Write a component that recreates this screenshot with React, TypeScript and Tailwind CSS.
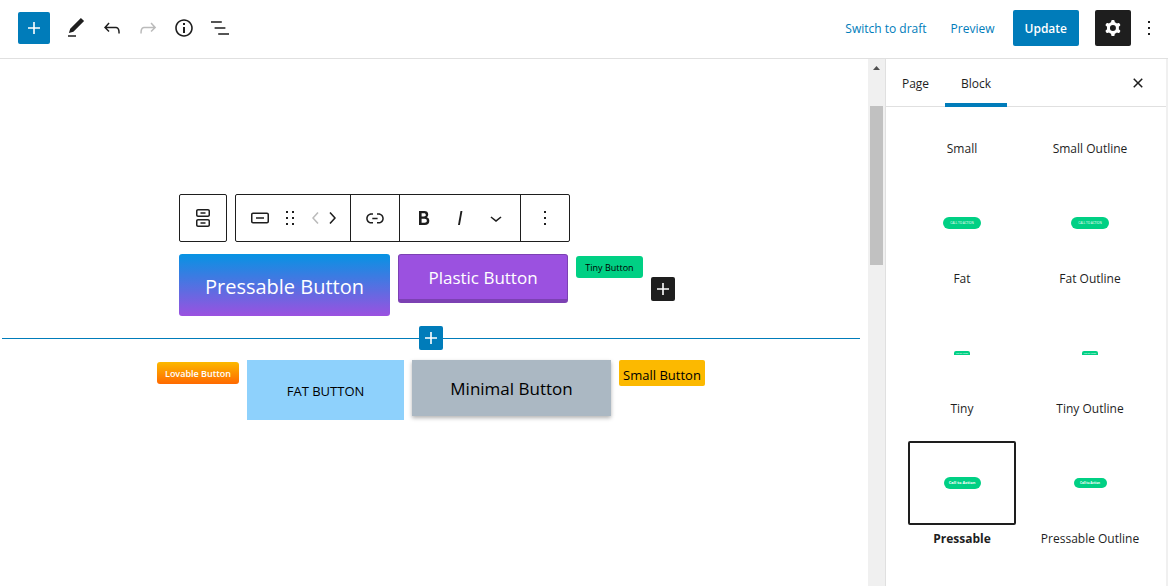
import { ReactNode } from 'react';

const icons = {
  plus: 'M18 11.2h-5.2V6h-1.6v5.2H6v1.6h5.2V18h1.6v-5.2H18z',
  edit: 'M20.1 5.1L16.9 2 6.2 12.7l-1.3 4.4 4.5-1.3L20.1 5.1zM4 20.8h8v-1.5H4v1.5z',
  undo: 'M18.3 11.7c-.6-.6-1.4-.9-2.3-.9H6.7l2.9-3.3-1.1-1-4.5 5L8.5 16l1-1-2.7-2.7H16c.5 0 .9.2 1.3.5 1 1 1 3.4 1 4.5v.3h1.5v-.2c0-1.5 0-4.3-1.5-5.7z',
  redo: 'M15.6 6.5l-1.1 1 2.9 3.3H8c-.9 0-1.7.3-2.3.9-1.4 1.5-1.4 4.2-1.4 5.6v.2h1.5v-.3c0-1.1 0-3.5 1-4.5.3-.3.7-.5 1.3-.5h9.2L14.5 15l1.1 1.1 4.6-4.6-4.6-5z',
  info: 'M12 3.2c-4.8 0-8.8 3.9-8.8 8.8 0 4.8 3.9 8.8 8.8 8.8 4.8 0 8.8-3.9 8.8-8.8 0-4.8-4-8.8-8.8-8.8zm0 16c-4 0-7.2-3.3-7.2-7.2C4.8 8 8 4.8 12 4.8s7.2 3.3 7.2 7.2c0 4-3.2 7.2-7.2 7.2zM11 17h2v-6h-2v6zm0-8h2V7h-2v2z',
  listView: 'M13.8 5.2H3v1.5h10.8V5.2zm-3.6 12v1.5H21v-1.5H10.2zm7.2-6H6.6v1.5h10.8v-1.5z',
  cog: 'M10.289 4.836A1 1 0 0111.275 4h1.306a1 1 0 01.987.836l.244 1.466c.787.26 1.503.679 2.108 1.218l1.393-.522a1 1 0 011.216.437l.653 1.13a1 1 0 01-.23 1.273l-1.148.944a6.025 6.025 0 010 2.435l1.149.946a1 1 0 01.23 1.272l-.653 1.13a1 1 0 01-1.216.437l-1.394-.522c-.605.54-1.32.958-2.108 1.218l-.244 1.466a1 1 0 01-.987.836h-1.306a1 1 0 01-.986-.836l-.244-1.466a5.995 5.995 0 01-2.108-1.218l-1.394.522a1 1 0 01-1.217-.436l-.653-1.131a1 1 0 01.23-1.272l1.149-.946a6.026 6.026 0 010-2.435l-1.148-.944a1 1 0 01-.23-1.272l.653-1.131a1 1 0 011.217-.437l1.393.522a5.994 5.994 0 012.108-1.218l.244-1.466zM14.929 12a3 3 0 11-6 0 3 3 0 016 0z',
  more: 'M13 19h-2v-2h2v2zm0-6h-2v-2h2v2zm0-6h-2V5h2v2z',
  close:
    'M12 13.06l3.712 3.713 1.061-1.06L13.061 12l3.712-3.712-1.06-1.06L12 10.938 8.288 7.227l-1.061 1.06L10.939 12l-3.712 3.712 1.06 1.061L12 13.061z',
  buttons:
    'M17 3H7c-1.1 0-2 .9-2 2v4c0 1.1.9 2 2 2h10c1.1 0 2-.9 2-2V5c0-1.1-.9-2-2-2zm.5 6c0 .3-.2.5-.5.5H7c-.3 0-.5-.2-.5-.5V5c0-.3.2-.5.5-.5h10c.3 0 .5.2.5.5v4zm-8-1.2h5V6.2h-5v1.6zM17 13H7c-1.1 0-2 .9-2 2v4c0 1.1.9 2 2 2h10c1.1 0 2-.9 2-2v-4c0-1.1-.9-2-2-2zm.5 6c0 .3-.2.5-.5.5H7c-.3 0-.5-.2-.5-.5v-4c0-.3.2-.5.5-.5h10c.3 0 .5.2.5.5v4zm-8-1.2h5v-1.5h-5v1.5z',
  button:
    'M19 6.5H5c-1.1 0-2 .9-2 2v7c0 1.1.9 2 2 2h14c1.1 0 2-.9 2-2v-7c0-1.1-.9-2-2-2zm.5 9c0 .3-.2.5-.5.5H5c-.3 0-.5-.2-.5-.5v-7c0-.3.2-.5.5-.5h14c.3 0 .5.2.5.5v7zM8 12.8h8v-1.5H8v1.5z',
  drag: 'M8 7h2V5H8v2zm6-2v2h2V5h-2zm-6 8h2v-2H8v2zm6 0h2v-2h-2v2zm-6 6h2v-2H8v2zm6 0h2v-2h-2v2z',
  left: 'M14.6 7l-1.2-1L8 12l5.4 6 1.2-1-4.6-5z',
  right: 'M10.6 6L9.4 7l4.6 5-4.6 5 1.2 1 5.4-6z',
  down: 'M17.5 11.6L12 16l-5.5-4.4.9-1.2L12 14l4.5-3.6 1 1.2z',
  link: 'M15.6 7.2H14v1.5h1.6c2 0 3.7 1.7 3.7 3.7s-1.7 3.7-3.7 3.7H14v1.5h1.6c2.8 0 5.2-2.3 5.2-5.2 0-2.9-2.3-5.2-5.2-5.2zM4.7 12.4c0-2 1.7-3.7 3.7-3.7H10V7.2H8.4c-2.9 0-5.2 2.3-5.2 5.2 0 2.9 2.3 5.2 5.2 5.2H10v-1.5H8.4c-2 0-3.7-1.7-3.7-3.7zm4.6.9h5.3v-1.5H9.3v1.5z',
  bold: 'M14.7 11.3c1-.6 1.5-1.6 1.5-3 0-2.3-1.3-3.4-4-3.4H7v14h5.8c1.4 0 2.5-.3 3.3-1 .8-.7 1.2-1.7 1.2-2.9.1-1.9-.8-3.1-2.6-3.7zm-5.1-4h2.3c.6 0 1.1.1 1.4.4.3.3.5.7.5 1.2s-.2 1-.5 1.2c-.3.3-.8.4-1.4.4H9.6V7.3zm4.6 9c-.4.3-1 .4-1.7.4H9.6v-3.9h2.9c.7 0 1.3.2 1.7.5.4.3.6.8.6 1.5s-.2 1.2-.6 1.5z',
  italic: 'M12.5 5L10 19h1.9l2.5-14z',
};

type IconButtonProps = {
  icon: keyof typeof icons;
  label: string;
  className?: string;
};
const IconButton = ({ icon, label, className = '' }: IconButtonProps) => {
  return (
    <button
      type="button"
      aria-label={label}
      className={`flex shrink-0 justify-center items-center ${className}`}
    >
      <svg
        className="w-6 h-6 shrink-0"
        viewBox="0 0 24 24"
        fill="currentColor"
        fillRule="evenodd"
      >
        <path d={icons[icon]} />
      </svg>
    </button>
  );
};

const Header = () => {
  return (
    <header className="flex justify-between items-center h-[59px] pb-0.5 pl-[18px] pr-[7px] border-b border-[#e0e0e0]">
      <div className="flex items-center">
        <IconButton
          icon="plus"
          label="Add block"
          className="w-8 h-8 mr-2 rounded-xs bg-[#007cba] text-white"
        />
        <IconButton icon="edit" label="Tools" className="w-9 h-9" />
        <IconButton icon="undo" label="Undo" className="w-9 h-9" />
        <IconButton icon="redo" label="Redo" className="w-9 h-9 text-[#bbb]" />
        <IconButton icon="info" label="Details" className="w-9 h-9" />
        <IconButton icon="listView" label="List view" className="w-9 h-9" />
      </div>
      <div className="flex items-center">
        <button type="button" className="h-9 pt-0.5 mr-6 text-[#007cba]">
          Switch to draft
        </button>
        <button type="button" className="h-9 pt-0.5 mr-[18px] text-[#007cba]">
          Preview
        </button>
        <button
          type="button"
          className="h-9 px-3 pt-0.5 mr-4 rounded-xs bg-[#007cba] text-white font-semibold"
        >
          Update
        </button>
        <IconButton
          icon="cog"
          label="Settings"
          className="w-9 h-9 rounded-xs bg-[#1e1e1e] text-white"
        />
        <IconButton icon="more" label="Options" className="w-6 h-9 ml-1.5" />
      </div>
    </header>
  );
};

const BlockToolbar = () => {
  return (
    <div className="flex gap-2 mb-3">
      <div className="border border-[#1e1e1e] rounded-xs">
        <IconButton icon="buttons" label="Select Buttons" className="w-[46px] h-[46px]" />
      </div>
      <div className="flex border border-[#1e1e1e] rounded-xs divide-x divide-[#1e1e1e]">
        <div className="flex pr-2.5">
          <IconButton icon="button" label="Button" className="w-12 h-[46px]" />
          <IconButton icon="drag" label="Drag" className="w-3 h-[46px] mr-3" />
          <IconButton icon="left" label="Move left" className="w-4 h-[46px] text-[#bbb]" />
          <IconButton icon="right" label="Move right" className="w-4 h-[46px]" />
        </div>
        <IconButton icon="link" label="Link" className="w-[49px] h-[46px]" />
        <div className="flex px-1.5">
          <IconButton icon="bold" label="Bold" className="w-9 h-[46px]" />
          <IconButton icon="italic" label="Italic" className="w-9 h-[46px]" />
          <IconButton icon="down" label="More" className="w-9 h-[46px]" />
        </div>
        <IconButton icon="more" label="Options" className="w-12 h-[46px]" />
      </div>
    </div>
  );
};

const Canvas = () => {
  return (
    <main className="flex-1 pt-[135px] pl-0.5 pr-2">
      <div className="w-fit mx-auto">
        <BlockToolbar />
        <div className="flex items-start gap-2 pr-2">
          <button
            type="button"
            className="w-[211px] h-[62px] pt-1 rounded-[3px] bg-[linear-gradient(#0693e3,#9b51e0)] text-xl text-white"
          >
            Pressable Button
          </button>
          <button
            type="button"
            className="w-[170px] h-[49px] pt-0.5 rounded-[3px] border border-b-4 border-[#7c41b3] bg-[#9b51e0] text-[17px] text-white"
          >
            Plastic Button
          </button>
          <button
            type="button"
            className="w-[67px] h-[22px] pt-0.5 mt-0.5 rounded-[3px] bg-[#00d084] text-[9px] text-black"
          >
            Tiny Button
          </button>
          <IconButton
            icon="plus"
            label="Add button"
            className="w-6 h-6 mt-[23px] rounded-xs bg-[#1e1e1e] text-white"
          />
        </div>
      </div>
      <div className="flex items-center my-2.5">
        <div className="flex-1 h-px bg-[#007cba]" />
        <IconButton
          icon="plus"
          label="Insert block"
          className="w-6 h-6 rounded-xs bg-[#007cba] text-white"
        />
        <div className="flex-1 h-px bg-[#007cba]" />
      </div>
      <div className="flex justify-center items-start gap-2">
        <button
          type="button"
          className="w-[82px] h-[22px] pt-0.5 mt-0.5 rounded-[3px] bg-[linear-gradient(#fcb900,#ff6900)] text-[9px] font-semibold text-white"
        >
          Lovable Button
        </button>
        <button type="button" className="w-[157px] h-[60px] pt-1 bg-[#8ed1fc] text-[13px] text-black">
          FAT BUTTON
        </button>
        <button
          type="button"
          className="w-[199px] h-14 pt-0.5 bg-[#abb8c3] text-[17px] text-black shadow-[0_2px_4px_rgba(0,0,0,0.3)]"
        >
          Minimal Button
        </button>
        <button
          type="button"
          className="w-[86px] h-[26px] pt-1 rounded-xs bg-[#fcb900] text-[13px] leading-5 text-black"
        >
          Small Button
        </button>
      </div>
    </main>
  );
};

const Scrollbar = () => {
  return (
    <div className="w-[17px] px-0.5 bg-[#f0f0f0]">
      <svg className="w-[13px] h-[47px]" viewBox="0 0 13 47">
        <path d="M3 11l3.5-4 3.5 4z" fill="#505050" />
      </svg>
      <div className="h-[159px] bg-[#c1c1c1]" />
    </div>
  );
};

type StyleItemProps = {
  name: string;
  active?: boolean;
  children?: ReactNode;
};
const StyleItem = ({ name, active, children }: StyleItemProps) => {
  return (
    <button type="button" className="flex flex-col items-center h-[130px]">
      <span
        className={`flex justify-center items-center w-[108px] h-[84px] rounded-xs border-2 ${
          active ? 'border-[#1e1e1e]' : 'border-transparent'
        }`}
      >
        {children}
      </span>
      <span className={`leading-7 ${active ? 'font-bold' : ''}`}>{name}</span>
    </button>
  );
};

const FatPreview = () => (
  <span className="w-[38px] h-3 rounded-full bg-[#00d084] text-[3px] leading-[12px] text-white text-center">
    CALL TO ACTION
  </span>
);

const TinyPreview = () => (
  <span className="w-4 h-1 rounded-t-xs overflow-hidden bg-[#00d084] text-[2px] leading-[6px] text-white text-center">
    Call to Action
  </span>
);

const Sidebar = () => {
  return (
    <aside className="flex flex-col w-[283px] shrink-0 border-l border-l-[#e0e0e0] border-r-2 border-r-[#f0f0f0]">
      <div className="flex items-center h-12 pr-4 border-b border-[#e0e0e0]">
        <button type="button" className="h-12 w-[59px] pt-0.5">
          Page
        </button>
        <button type="button" className="h-12 w-[62px] pt-1.5 border-b-4 border-[#007cba]">
          Block
        </button>
        <IconButton icon="close" label="Close settings" className="w-6 h-6 ml-auto" />
      </div>
      <div className="flex-1 overflow-hidden">
        {/* scrolled past the top of the first row */}
        <div className="grid grid-cols-2 px-3 -mt-14">
          <StyleItem name="Small" />
          <StyleItem name="Small Outline" />
          <StyleItem name="Fat">
            <FatPreview />
          </StyleItem>
          <StyleItem name="Fat Outline">
            <FatPreview />
          </StyleItem>
          <StyleItem name="Tiny">
            <TinyPreview />
          </StyleItem>
          <StyleItem name="Tiny Outline">
            <TinyPreview />
          </StyleItem>
          <StyleItem name="Pressable" active>
            <span className="w-[37px] h-3 rounded-full bg-[#00d084] text-[4px] leading-[12px] font-bold text-white text-center">
              Call to Action
            </span>
          </StyleItem>
          <StyleItem name="Pressable Outline">
            <span className="w-[33px] h-2.5 rounded-full bg-[#00d084] text-[3px] leading-[10px] font-bold text-white text-center">
              Call to Action
            </span>
          </StyleItem>
        </div>
      </div>
    </aside>
  );
};

const App = () => {
  return (
    <div className="flex flex-col h-screen overflow-hidden bg-white text-[12px] text-[#1e1e1e] font-['Open_Sans','Noto_Sans',sans-serif]">
      <Header />
      <div className="flex flex-1 min-h-0">
        <Canvas />
        <Scrollbar />
        <Sidebar />
      </div>
    </div>
  );
};

export default App;
